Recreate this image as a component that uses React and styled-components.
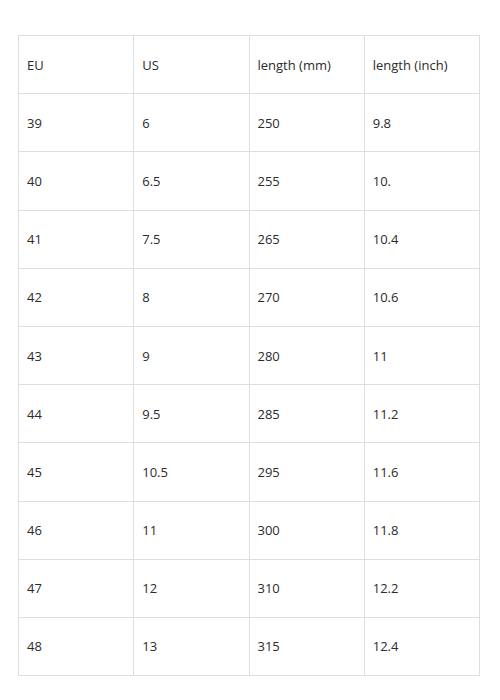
import React from "react";
import styled, { createGlobalStyle } from "styled-components";

const Global = createGlobalStyle`
  body {
    margin: 0;
    background: #fff;
    font-family: "Open Sans", "Liberation Sans", sans-serif;
  }
`;

const Page = styled.div`
  padding: 35px 0 0 18px;
`;

const Table = styled.table`
  width: 462px;
  border-collapse: collapse;
  table-layout: fixed;
  font-size: 13px;
  color: #2b2b2b;
`;

const Cell = styled.td`
  border: 1px solid #dedede;
  height: 57.2px;
  padding: 0 0 0 8px;
  vertical-align: middle;
  text-align: left;
`;

const rows = [
  ["EU", "US", "length (mm)", "length (inch)"],
  ["39", "6", "250", "9.8"],
  ["40", "6.5", "255", "10."],
  ["41", "7.5", "265", "10.4"],
  ["42", "8", "270", "10.6"],
  ["43", "9", "280", "11"],
  ["44", "9.5", "285", "11.2"],
  ["45", "10.5", "295", "11.6"],
  ["46", "11", "300", "11.8"],
  ["47", "12", "310", "12.2"],
  ["48", "13", "315", "12.4"],
];

export default function App() {
  return (
    <>
      <Global />
      <Page>
        <Table>
          <tbody>
            {rows.map((r, i) => (
              <tr key={i}>
                {r.map((c, j) => (
                  <Cell key={j}>{c}</Cell>
                ))}
              </tr>
            ))}
          </tbody>
        </Table>
      </Page>
    </>
  );
}
